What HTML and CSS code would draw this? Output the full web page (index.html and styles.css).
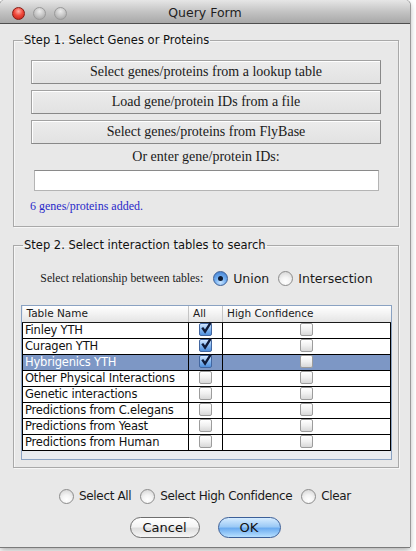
FILE: index.html
```html
<!DOCTYPE html>
<html>
<head>
<meta charset="utf-8">
<link rel="stylesheet" href="styles.css">
</head>
<body>
<div class="window">
  <div class="titlebar">
    <div class="lights">
      <span class="light red"></span>
      <span class="light gray"></span>
      <span class="light gray"></span>
    </div>
    <div class="title">Query Form</div>
  </div>
  <div class="content">
    <fieldset class="group step1">
      <legend>Step 1. Select Genes or Proteins</legend>
      <div class="btn-stack">
        <div class="metal-btn">Select genes/proteins from a lookup table</div>
        <div class="metal-btn">Load gene/protein IDs from a file</div>
        <div class="metal-btn">Select genes/proteins from FlyBase</div>
      </div>
      <div class="enter-label">Or enter gene/protein IDs:</div>
      <div class="id-input"></div>
      <div class="status">6 genes/proteins added.</div>
    </fieldset>

    <fieldset class="group step2">
      <legend>Step 2. Select interaction tables to search</legend>
      <div class="relation">
        <span class="rel-label">Select relationship between tables:</span>
        <span class="radio on"></span><span class="radio-text">Union</span>
        <span class="radio"></span><span class="radio-text">Intersection</span>
      </div>
      <div class="pane">
        <table class="grid">
          <colgroup><col class="c1"><col class="c2"><col class="c3"></colgroup>
          <thead>
            <tr><th class="h1">Table Name</th><th class="h2">All</th><th class="h3">High Confidence</th></tr>
          </thead>
          <tbody>
            <tr><td class="name">Finley YTH</td><td class="ck"><span class="cb on"><svg viewBox="0 0 13 13"><path d="M3 6.2 L5.6 9.8 L11 1.2"/></svg></span></td><td class="ck"><span class="cb"></span></td></tr>
            <tr><td class="name">Curagen YTH</td><td class="ck"><span class="cb on"><svg viewBox="0 0 13 13"><path d="M3 6.2 L5.6 9.8 L11 1.2"/></svg></span></td><td class="ck"><span class="cb"></span></td></tr>
            <tr class="sel"><td class="name">Hybrigenics YTH</td><td class="ck"><span class="cb on"><svg viewBox="0 0 13 13"><path d="M3 6.2 L5.6 9.8 L11 1.2"/></svg></span></td><td class="ck"><span class="cb"></span></td></tr>
            <tr><td class="name">Other Physical Interactions</td><td class="ck"><span class="cb"></span></td><td class="ck"><span class="cb"></span></td></tr>
            <tr><td class="name">Genetic interactions</td><td class="ck"><span class="cb"></span></td><td class="ck"><span class="cb"></span></td></tr>
            <tr><td class="name">Predictions from C.elegans</td><td class="ck"><span class="cb"></span></td><td class="ck"><span class="cb"></span></td></tr>
            <tr><td class="name">Predictions from Yeast</td><td class="ck"><span class="cb"></span></td><td class="ck"><span class="cb"></span></td></tr>
            <tr><td class="name">Predictions from Human</td><td class="ck"><span class="cb"></span></td><td class="ck"><span class="cb"></span></td></tr>
          </tbody>
        </table>
      </div>
    </fieldset>

    <div class="select-row">
      <span class="radio"></span><span class="radio-text">Select All</span>
      <span class="radio"></span><span class="radio-text">Select High Confidence</span>
      <span class="radio"></span><span class="radio-text">Clear</span>
    </div>

    <div class="actions">
      <div class="aqua">Cancel</div>
      <div class="aqua default">OK</div>
    </div>
  </div>
</div>
</body>
</html>
```

FILE: styles.css
```css
* { box-sizing: border-box; }
html, body { margin: 0; padding: 0; }
body {
  background: #ffffff;
  width: 416px;
  height: 551px;
  overflow: hidden;
  font-family: "DejaVu Sans", "Liberation Sans", sans-serif;
}
.window {
  width: 410px;
  height: 547px;
  background: #e8e8e8;
  border-radius: 5px 5px 0 0;
  box-shadow: 0 1px 0 #7a7a7a, 1px 0 0 #9a9a9a, -1px 0 0 #9a9a9a, 0 3px 6px rgba(0,0,0,0.35);
  display: flex;
  flex-direction: column;
  overflow: hidden;
}
.titlebar {
  height: 24px;
  flex: none;
  background: linear-gradient(#e6e6e6, #c4c4c4 50%, #a8a8a8);
  border-bottom: 1px solid #4e4e4e;
  border-radius: 5px 5px 0 0;
  display: flex;
  align-items: center;
  position: relative;
}
.lights {
  display: flex;
  gap: 8px;
  padding-left: 12px;
  padding-top: 3px;
}
.light {
  width: 13px;
  height: 13px;
  border-radius: 50%;
  display: block;
}
.light.red {
  background: radial-gradient(circle at 50% 30%, #ffb0a8 0, #f04a3c 45%, #b81c14 100%);
  border: 1px solid #8a1a12;
}
.light.gray {
  background: radial-gradient(circle at 50% 30%, #ececec 0, #c6c6c6 50%, #9a9a9a 100%);
  border: 1px solid #9a9a9a;
}
.title {
  position: absolute;
  left: 0;
  right: 0;
  top: 5px;
  text-align: center;
  font-size: 12.5px;
  color: #1e1e1e;
  pointer-events: none;
}
.content {
  flex: 1;
  display: flex;
  flex-direction: column;
}
.group {
  margin: 0 0 0 13px;
  width: 386px;
  border: 1px solid #a9a9a9;
  box-shadow: inset 1px 1px 0 #f6f6f6, 1px 1px 0 #f6f6f6;
  min-width: 0;
}
.group legend {
  font-size: 11.5px;
  line-height: 16px;
  color: #111;
  padding: 0 1px;
}
.step1 {
  margin-top: 8px;
  padding: 12px 17px 13px 17px;
}
.step1 legend { margin-left: -8px; }
.btn-stack {
  display: flex;
  flex-direction: column;
  gap: 6px;
}
.metal-btn {
  height: 24px;
  background: linear-gradient(#ececec, #e2e2e2);
  border: 1px solid #a2a2a2;
  border-right-color: #888;
  border-bottom-color: #888;
  box-shadow: inset 1px 1px 0 #fff;
  font-family: "Liberation Serif", "DejaVu Serif", serif;
  font-size: 14px;
  line-height: 21px;
  text-align: center;
  color: #1a1a1a;
}
.enter-label {
  margin-top: 4px;
  font-family: "Liberation Serif", serif;
  font-size: 14px;
  line-height: 18px;
  text-align: center;
  color: #1a1a1a;
}
.id-input {
  margin: 4px 2px 0 3px;
  height: 21px;
  background: #fff;
  border: 1px solid #b4b4b4;
  border-top-color: #8a8a8a;
}
.status {
  margin: 8px 0 0 -1px;
  font-family: "Liberation Serif", serif;
  font-size: 12px;
  line-height: 14px;
  color: #2828c8;
}
.step2 {
  margin-top: 10px;
  padding: 15px 6px 7px 7px;
}
.step2 legend { margin-left: 2px; }
.relation {
  display: flex;
  align-items: center;
  justify-content: center;
  height: 20px;
}
.rel-label {
  font-family: "Liberation Serif", serif;
  font-size: 11.75px;
  color: #1a1a1a;
  margin-right: 10px;
}
.radio {
  width: 15px;
  height: 15px;
  border-radius: 50%;
  border: 1px solid #8c8c8c;
  background: radial-gradient(circle at 50% 75%, #ffffff 0, #f4f4f4 40%, #cfcfcf 100%);
  display: inline-block;
  position: relative;
  flex: none;
}
.radio.on {
  border-color: #3d5f95;
  background: radial-gradient(circle at 50% 80%, #c8e4ff 0, #72aef0 45%, #3a78cc 100%);
}
.radio.on::after {
  content: "";
  position: absolute;
  left: 4px;
  top: 4px;
  width: 5px;
  height: 5px;
  border-radius: 50%;
  background: #0e1a30;
}
.radio-text {
  font-size: 12.5px;
  color: #1a1a1a;
  margin-left: 5px;
  margin-right: 9px;
}
.relation .radio-text:last-child { margin-right: 0; }
.pane {
  margin-top: 17px;
  height: 155px;
  border: 1px solid #8aa2c2;
  background: #e8ebef;
}
.grid {
  border-collapse: collapse;
  width: 368px;
  table-layout: fixed;
  font-size: 11.5px;
  letter-spacing: -0.2px;
  color: #111;
}
.c1 { width: 166px; }
.c2 { width: 34px; }
.c3 { width: 168px; }
.grid th {
  height: 16px;
  padding: 0 0 0 4px;
  font-weight: normal;
  font-size: 10.5px;
  letter-spacing: 0;
  text-align: left;
  line-height: 15px;
  background: linear-gradient(#ffffff, #f2f2f2 50%, #e4e4e4);
  border-right: 1px solid #c4c4c4;
  border-bottom: 1px solid #1a1a1a;
  color: #1a1a1a;
}
.grid th.h3 { border-right: none; }
.grid td {
  height: 16px;
  padding: 0;
  border: 1px solid #000;
  background: #fff;
  line-height: 14px;
}
.grid td.name { padding-left: 2px; white-space: nowrap; overflow: hidden; }
.grid td.ck { text-align: center; }
.grid tr.sel td { background: #7d97c5; color: #fff; }
.cb {
  display: inline-block;
  width: 13px;
  height: 13px;
  vertical-align: middle;
  margin-top: -2px;
  border: 1px solid #9c9c9c;
  border-radius: 2px;
  background: linear-gradient(#ffffff, #f0f0f0 50%, #d8d8d8);
  position: relative;
}
.cb.on {
  border-color: #4266a0;
  background: linear-gradient(#d2e6ff, #86b8f0 50%, #4f8fdc);
}
.cb svg {
  position: absolute;
  left: -1px;
  top: -3px;
  width: 14px;
  height: 14px;
  overflow: visible;
}
.cb svg path {
  fill: none;
  stroke: #0f1a38;
  stroke-width: 2.2;
  stroke-linejoin: miter;
}
.select-row {
  margin-top: 20px;
  display: flex;
  align-items: center;
  justify-content: center;
  height: 16px;
}
.select-row .radio-text {
  font-size: 12px;
  letter-spacing: -0.35px;
}
.select-row .radio-text:last-child { margin-right: 0; }
.actions {
  margin-top: 13px;
  display: flex;
  justify-content: center;
  gap: 18px;
}
.aqua {
  height: 21px;
  border-radius: 11px;
  border: 1px solid #6e6e6e;
  background: linear-gradient(#ffffff, #f4f4f4 45%, #dedede 55%, #f6f6f6);
  font-size: 13px;
  line-height: 19px;
  text-align: center;
  color: #111;
  width: 70px;
}
.aqua.default {
  width: 63px;
  border-color: #3b5f98;
  background: linear-gradient(#d6ecff, #9ccaf6 45%, #6cacf0 55%, #b8e0ff);
}
```
